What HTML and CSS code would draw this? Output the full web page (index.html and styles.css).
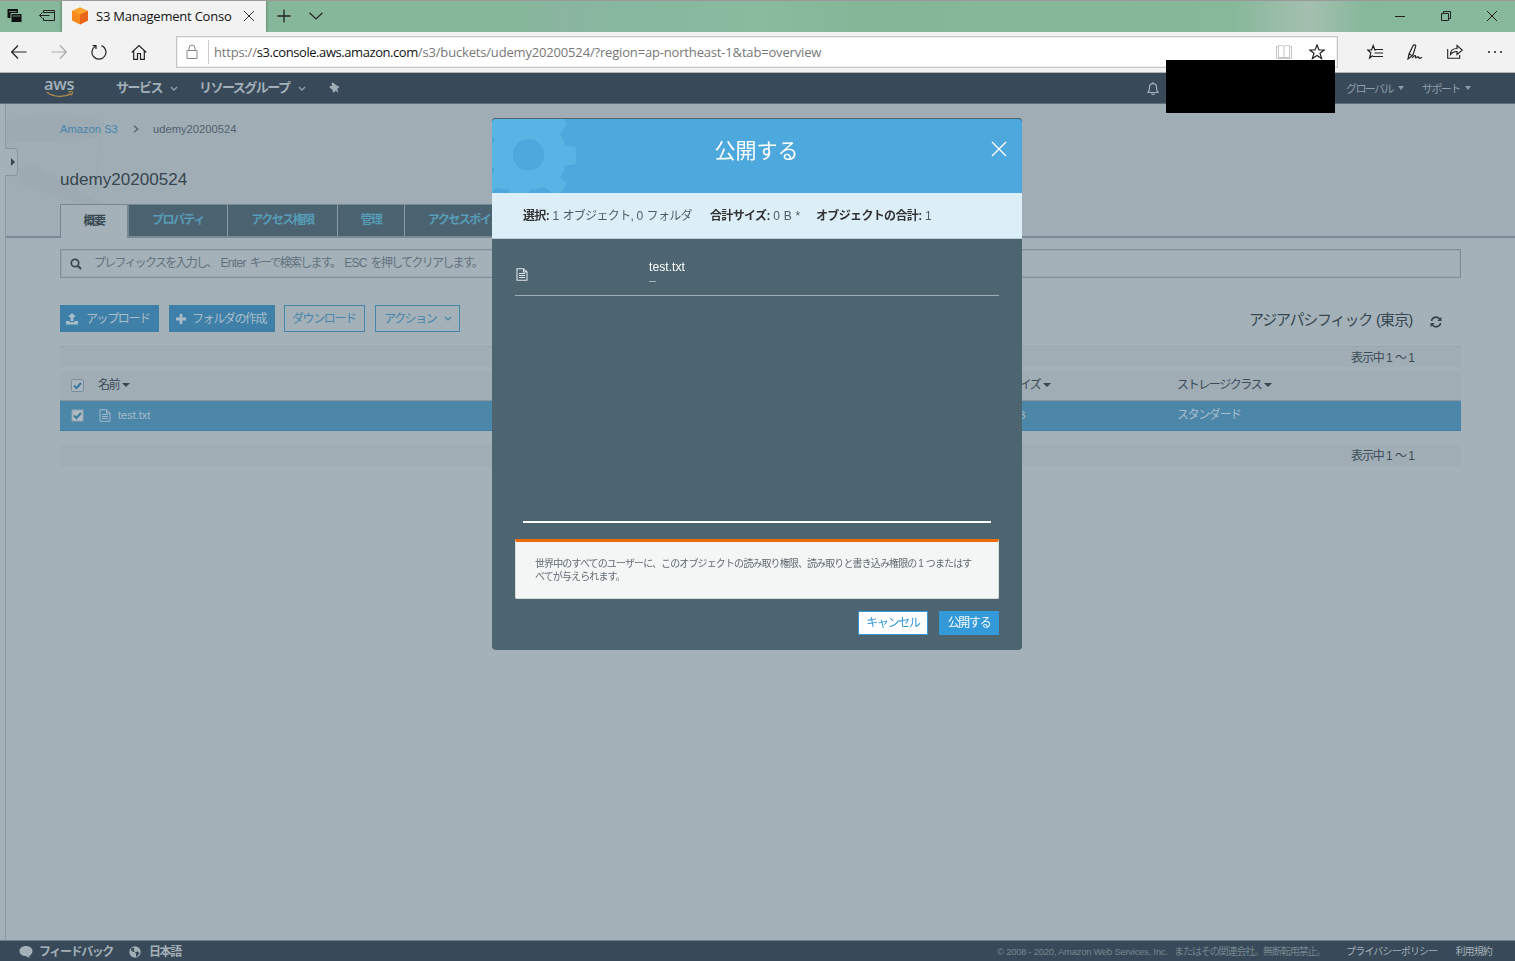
FILE: index.html
```html
<!DOCTYPE html>
<html lang="ja">
<head>
<meta charset="utf-8">
<title>S3 Management Console</title>
<link rel="stylesheet" href="styles.css">
</head>
<body>
<div class="window">
  <header class="titlebar">
    <svg class="tb-icon set-tabs" viewBox="0 0 16 16"><path d="M.5 1h10.500v9H.5z" fill="#111"/><path d="M4 5.500h11v9H4z" fill="#111" stroke="#87b89b"/><path d="M2 3.500h7.500M5.500 8h8" stroke="#87b89b" stroke-width=".7"/></svg>
    <svg class="tb-icon set-aside" viewBox="0 0 16 16"><path d="M4.500 5V2.500h11v10h-11V10M4.500 4.500h11M.5 7.500h10M3.500 4.500l-3 3 3 3" fill="none" stroke="#222"/></svg>
    <div class="tab">
      <svg class="cube" viewBox="0 0 18 18"><path d="M9 .5l8 3.500v9.500L9 17.500l-8-4V4z" fill="#f68a1e"/><path d="M9 .5l8 3.500-8 3.500L1 4z" fill="#fba12c"/><path d="M9 7.500L17 4v9.500l-8 4z" fill="#e9651b"/></svg>
      <span class="tab-title">S3 Management Conso</span>
      <svg class="tab-close" viewBox="0 0 12 12"><path d="M1 1l10 10M11 1L1 11" stroke="#333"/></svg>
    </div>
    <svg class="new-tab" viewBox="0 0 14 14"><path d="M7 .5v13M.5 7h13" stroke="#222" stroke-width="1.300"/></svg>
    <svg class="tab-list" viewBox="0 0 14 8"><path d="M.5.8L7 7l6.500-6.200" fill="none" stroke="#222" stroke-width="1.200"/></svg>
    <div class="win-controls">
      <svg viewBox="0 0 12 12"><path d="M1 6.500h10" stroke="#222"/></svg>
      <svg viewBox="0 0 12 12"><path d="M1.500 3.500h7v7h-7zM3.500 3.500v-2h7v7h-2" fill="none" stroke="#222"/></svg>
      <svg viewBox="0 0 12 12"><path d="M1 1l10 10M11 1L1 11" stroke="#222"/></svg>
    </div>
  </header>

  <div class="toolbar">
    <div class="nav-buttons">
      <svg viewBox="0 0 16 16"><path d="M15.500 8H.8M7 1.500L.7 8 7 14.500" fill="none" stroke="#222" stroke-width="1.200"/></svg>
      <svg viewBox="0 0 16 16"><path d="M.5 8h14.700M9 1.500L15.300 8 9 14.500" fill="none" stroke="#aaa" stroke-width="1.200"/></svg>
      <svg viewBox="0 0 16 16"><path d="M10.500 1.600A7 7 0 1 1 4.200 2.200M1.500 1.500h3.500v3.500" fill="none" stroke="#222" stroke-width="1.200"/></svg>
      <svg viewBox="0 0 16 16"><path d="M.7 8.500L8 1.500l7.300 7M2.700 7v8.300h3.800V9.500h3v5.800h3.800V7" fill="none" stroke="#222" stroke-width="1.200"/></svg>
    </div>
    <div class="address">
      <svg class="lock" viewBox="0 0 12 16"><path d="M1 6.500h10v8H1zM3 6.500V4a3 3 0 0 1 6 0v2.500" fill="none" stroke="#888"/></svg>
      <div class="url"><span class="u-scheme">https://</span><span class="u-host">s3.console.aws.amazon.com</span><span class="u-path">/s3/buckets/udemy20200524/?region=ap-northeast-1&amp;tab=overview</span></div>
      <svg class="book" viewBox="0 0 16 14"><path d="M.5 1.500h2V.7C5 .3 7 .5 8 1.500 9 .5 11 .3 13.500.7v.8h2v12H.5zM8 1.500v11M2.500 1.500v11h11v-11" fill="none" stroke="#c4c4c4"/></svg>
      <svg class="star" viewBox="0 0 16 16"><path d="M8 1l2 5h5.200l-4.200 3.300 1.600 5.200L8 11.400l-4.600 3.100L5 9.300.8 6H6z" fill="none" stroke="#222" stroke-width="1.200"/></svg>
    </div>
    <div class="browser-tools">
      <svg viewBox="0 0 16 16"><path d="M9 6H7.800L6.200 1.500 4.600 6H.7l3.100 2.800L2.600 14 6 11.500M7 5.500h9M7.500 9h8.500M6 12.500h10" fill="none" stroke="#222" stroke-width="1.200"/></svg>
      <svg viewBox="0 0 16 16"><path d="M1 15l1-5L6 1.800C6.800.3 9 .5 8.700 2.200L6 11l-5 4zM2.200 10L5 11.500M5 14c2-2.500 3.300-3 3.500-2s-.7 2.300.7 1.800l1.500-1c1-.5.8 1.500 2 1.500s1.500-1 2.500-.8" fill="none" stroke="#222" stroke-width="1.200"/></svg>
      <svg viewBox="0 0 16 16"><path d="M.7 5v9.300h12V11M3.500 10.500c0-4 2.500-6 6.500-6V1.500l5.300 4.700L10 10.500v-3c-3 0-5 1-6.500 3z" fill="none" stroke="#222" stroke-width="1.100"/></svg>
      <svg viewBox="0 0 16 16"><path d="M1 8h2M7 8h2M13 8h2" stroke="#222" stroke-width="1.600"/></svg>
    </div>
  </div>

  <nav class="awsnav jp">
    <div class="aws-logo"><span>aws</span>
      <svg viewBox="0 0 32 8"><path d="M1 1.500c8 6 20 6 28 1.500" fill="none" stroke="#b58a4c" stroke-width="1.500"/><path d="M25.500 1.500c2-1 4-1 4.500-.5s0 2.500-1.200 4" fill="none" stroke="#b58a4c" stroke-width="1.200"/></svg>
    </div>
    <span class="nav-item n1">サービス</span>
    <svg class="chev c1" viewBox="0 0 8 6"><path d="M1 1l3 3 3-3" fill="none" stroke="#91a0aa" stroke-width="1.300"/></svg>
    <span class="nav-item n2">リソースグループ</span>
    <svg class="chev c2" viewBox="0 0 8 6"><path d="M1 1l3 3 3-3" fill="none" stroke="#91a0aa" stroke-width="1.300"/></svg>
    <svg class="pin" viewBox="0 0 12 12"><path d="M3.500 1L5 .5l4 3.300 1.800.2.200 1.500-1.800 1.500 1.300 4L7.500 8.500 6.300 10.500 5 10.300 4.500 8 1.500 5.500 2 4h2z" fill="#a0adb6"/></svg>
    <div class="nav-right">
      <svg class="bell" viewBox="0 0 12 14"><path d="M1 10.500c1.500-1.500 1.500-3 1.500-5C2.500 3 4 1.700 6 1.700S9.500 3 9.500 5.500c0 2 0 3.500 1.500 5zM6 0v1.700M4.500 11.500c.3 1.300 2.700 1.300 3 0" fill="none" stroke="#a3b0b9" stroke-width="1.200"/></svg>
      <span class="small-item g">グローバル</span><i class="tri"></i>
      <span class="small-item s">サポート</span><i class="tri"></i>
    </div>
  </nav>

  <main class="jp">
    <div class="rail"></div>
    <div class="content">
      <section class="top">
        <svg class="watermark" viewBox="0 0 110 104"><path d="M0 18c25-9 65-8 94-2v17C60 38 25 39 0 37z" fill="#9eaab2"/><path d="M10 68c5-8 15-10 25-3l70 39H87L15 80C10 77 8 72 10 68z" fill="#9eaab2"/><path d="M97 18l-9 74" stroke="#9eaab2"/></svg>
        <div class="crumbs"><a>Amazon S3</a><svg viewBox="0 0 6 8"><path d="M1 .8L4.800 4 1 7.200" fill="none" stroke="#50606a" stroke-width="1.200"/></svg><span>udemy20200524</span></div>
        <h1>udemy20200524</h1>
        <div class="tabs">
          <span class="t active">概要</span><span class="t w98">プロパティ</span><span class="t w109">アクセス権限</span><span class="t w66">管理</span><span class="t w130">アクセスポイント</span>
        </div>
      </section>
      <section class="body">
        <div class="search">
          <svg viewBox="0 0 12 12"><circle cx="5" cy="5" r="3.700" fill="none" stroke="#37474f" stroke-width="1.700"/><path d="M7.800 7.800l3.200 3.200" stroke="#37474f" stroke-width="2"/></svg>
          <p>プレフィックスを入力し、<b>Enter</b>キーで検索します。<b class="esc">ESC</b>を押してクリアします。</p>
        </div>
        <div class="actions">
          <span class="btn fill up"><svg viewBox="0 0 12 12"><path d="M6 0l4 4H7.500v4h-3V4H2zM0 8h3.500v1.200h5V8H12v3.500H0z" fill="#a9bdca"/></svg>アップロード</span>
          <span class="btn fill folder"><svg viewBox="0 0 12 12"><path d="M6 1v10M1 6h10" stroke="#a9bdca" stroke-width="2.800"/></svg>フォルダの作成</span>
          <span class="btn line dl">ダウンロード</span>
          <span class="btn line act">アクション<svg viewBox="0 0 8 6"><path d="M1 1l3 3 3-3" fill="none" stroke="#4585a9" stroke-width="1.200"/></svg></span>
          <span class="region">アジアパシフィック<em>(東京)</em></span>
          <svg class="refresh" viewBox="0 0 12 12"><path d="M1.500 5C2 .8 7.500 0 9.700 3.200M10.500 7C10 11.200 4.500 12 2.300 8.800" fill="none" stroke="#37474f" stroke-width="1.700"/><path d="M11.500.8V5H7.300zM.5 11.200V7h4.200z" fill="#37474f"/></svg>
        </div>
        <div class="pager first"><span>表示中 <b>1</b> ～ <b>1</b></span></div>
        <div class="row head">
          <span class="cell"><svg class="check" viewBox="0 0 13 13"><rect x=".5" y=".5" width="12" height="12" rx="1.500" fill="#a9b6be" stroke="#7c8e98"/><path d="M3 6.500L5.500 9 10 4" fill="none" stroke="#37799f" stroke-width="2"/></svg></span>
          <span class="cell name">名前<i class="tri dark"></i></span>
          <span class="cell size">サイズ<i class="tri dark"></i></span>
          <span class="cell">ストレージクラス<i class="tri dark"></i></span>
        </div>
        <div class="row selected">
          <span class="cell"><svg class="check" viewBox="0 0 13 13"><rect x="1" y="1" width="11" height="11" fill="#afbac1" stroke="#91a5af"/><path d="M3 6.500L5.500 9 10 4" fill="none" stroke="#37799f" stroke-width="2"/></svg></span>
          <span class="cell name"><svg class="doc" viewBox="0 0 12 13"><path d="M1 .7h6.500L11 4v8.300H1zM7.500.7V4H11M3 5.500h6M3 7.500h6M3 9.500h6" fill="none" stroke="#a3b8c5"/></svg><span class="file">test.txt</span></span>
          <span class="cell size"><span class="file">0 B</span></span>
          <span class="cell">スタンダード</span>
        </div>
        <div class="pager last"><span>表示中 <b>1</b> ～ <b>1</b></span></div>
      </section>
    </div>
  </main>

  <footer class="jp">
    <svg class="bubble" viewBox="0 0 14 12"><path d="M7 0c4 0 6.500 2.200 6.500 5S11 10 10 10l1 2-4.500-2C2.500 10 .5 7.500 .5 5 .5 2.200 3 0 7 0z" fill="#a4b0b8"/></svg>
    <span class="f-bold fb">フィードバック</span>
    <svg class="globe" viewBox="0 0 12 12"><circle cx="6" cy="6" r="5.700" fill="#a4b0b8"/><path d="M2 2.500l2-1 1.500 1L4.500 4l1.500 1.500L4.500 6 2.500 5zM6 6l3-.5 1.500 1.500L8.500 10 7 11V8z" fill="#384a59"/></svg>
    <span class="f-bold lang">日本語</span>
    <div class="f-right">
      <span class="copy">© 2008 - 2020, Amazon Web Services, Inc. </span><span class="copy-jp">またはその関連会社。無断転用禁止。</span>
      <span class="f-link">プライバシーポリシー</span><span class="f-link">利用規約</span>
    </div>
  </footer>

  <div class="panel-handle"><i></i></div>
  <div class="redacted"></div>

  <div class="modal jp">
    <div class="m-head">
      <svg class="gear" viewBox="0 0 84 74"><path fill="#57b4e4" fill-rule="evenodd" d="M2 0H72L75 5 68 15Q72 20 73 26L84 28V45L73 47Q72 53 68 58L75 64 69 74H60L54 69 49 68Q46 70 38 71L37 74H18L17 71L4 69 0 73V55L3 51 0 49V25L3 21 0 17V0ZM36.500 20a15.800 15.800 0 1 0 .1 0z"/></svg>
      <h2>公開する</h2>
      <svg class="m-close" viewBox="0 0 16 16"><path d="M1 1l14 14M15 1L1 15" stroke="#fff" stroke-width="1.400"/></svg>
    </div>
    <div class="m-sum">
      <p class="s1"><b>選択:</b> <i>1</i> オブジェクト, <i>0</i> フォルダ</p>
      <p class="s2"><b>合計サイズ:</b> <i>0 B *</i></p>
      <p class="s3"><b>オブジェクトの合計:</b> <i>1</i></p>
    </div>
    <div class="m-body">
      <div class="m-row">
        <svg class="doc" viewBox="0 0 12 13"><path d="M1 .7h6.500L11 4v8.300H1zM7.500.7V4H11M3 5.500h6M3 7.500h6M3 9.500h6" fill="none" stroke="#dce3e7" stroke-width="1.100"/></svg>
        <div class="m-file"><span>test.txt</span><span class="dash">–</span></div>
      </div>
      <div class="m-rule"></div>
      <div class="warn">世界中のすべてのユーザーに、このオブジェクトの読み取り権限、読み取りと書き込み権限の <b>1</b> つまたはす<br>べてが与えられます。</div>
      <div class="m-foot"><span class="mb cancel">キャンセル</span><span class="mb ok">公開する</span></div>
    </div>
  </div>
</div>
</body>
</html>
```
FILE: styles.css
```css
* { box-sizing: border-box; }
body { margin: 0; }
svg { display: block; flex: none; }
.window { position: relative; width: 1515px; height: 961px; overflow: hidden; display: flex; flex-direction: column; font-family: "Liberation Sans", "Noto Sans CJK JP", sans-serif; font-size: 12px; background: #a4b1b9; }
.jp { font-family: "Liberation Sans", "Noto Sans CJK JP", sans-serif; white-space: nowrap; }

/* browser chrome */
.titlebar { height: 32px; flex: none; display: flex; align-items: center; border-top: 1px solid #999; padding-bottom: 1px; background: linear-gradient(90deg, #87b89b 0, #86b79b 520px, #8ab5a0 560px, #87b89f 640px, #8abb9f 760px, #84b698 860px, #86b89a 1230px, #a4bfaf 1310px, #86b89b 1365px, #88b99d 100%); }
.tb-icon { width: 16px; height: 16px; }
.set-tabs { margin-left: 7px; }
.set-aside { margin-left: 16px; }
.tab { width: 204px; height: 31px; margin: 0 0 -1px 7px; background: #f2f2f2; display: flex; align-items: center; padding: 0 0 1px 9px; box-shadow: 0 0 3px rgba(0,0,0,.45); clip-path: inset(0 -3px 0 -3px); }
.cube { width: 18px; height: 18px; }
.tab-title { width: 143px; margin-left: 7px; font: 13px/20px "Open Sans", sans-serif; letter-spacing: -.22px; color: #111; white-space: nowrap; }
.tab-close { width: 12px; height: 12px; margin-left: 4px; }
.new-tab { width: 14px; height: 14px; margin-left: 11px; }
.tab-list { width: 14px; height: 8px; margin-left: 18px; }
.win-controls { margin-left: auto; display: flex; gap: 34px; padding-right: 17px; }
.win-controls svg { width: 12px; height: 12px; }
.toolbar { height: 41px; flex: none; background: #f2f2f2; border-bottom: 1px solid #b4b4b4; display: flex; align-items: center; padding-right: 12px; }
.nav-buttons { display: flex; gap: 24px; padding-left: 11px; width: 176px; }
.nav-buttons svg, .browser-tools svg { width: 16px; height: 16px; }
.address { width: 1162px; height: 32px; background: #fff; border: 1px solid #c6c6c6; display: flex; align-items: center; box-shadow: inset 0 0 0 1px #eee; }
.lock { width: 12px; height: 16px; margin: 0 10px 0 9px; }
.url { flex: 1; border-left: 1px solid #ccc; line-height: 24px; padding-left: 5px; font-family: "Open Sans", sans-serif; font-size: 13px; color: #777; white-space: nowrap; }
.u-scheme { letter-spacing: -.2px; }
.u-host { color: #111; letter-spacing: -.43px; }
.u-path { letter-spacing: -.17px; }
.book { width: 16px; height: 14px; margin-right: 17px; }
.star { width: 16px; height: 16px; margin-right: 12px; }
.browser-tools { margin-left: auto; display: flex; gap: 24px; }
.browser-tools svg:last-child { margin-right: 0; }

/* console navigation */
.awsnav { height: 31px; flex: none; background: #384a59; display: flex; align-items: center; border-bottom: 1px solid #5f707c; color: #a3b0b9; }
.aws-logo { width: 32px; height: 22px; margin-left: 44px; line-height: 14px; font-family: "Open Sans", sans-serif; font-size: 16.5px; font-weight: 600; letter-spacing: -.3px; }
.aws-logo span { display: block; height: 14px; }
.aws-logo svg { width: 32px; height: 7px; }
.nav-item { font-weight: 700; font-size: 13px; letter-spacing: -1.5px; line-height: 20px; }
.n1 { margin-left: 40px; width: 54px; }
.n2 { margin-left: 21px; width: 99px; }
.chev { width: 8px; height: 6px; margin-top: 2px; }
.pin { width: 12px; height: 12px; margin-left: 22px; }
.nav-right { margin-left: auto; display: flex; align-items: center; margin-right: 44px; }
.bell { width: 12px; height: 14px; margin: 2px 187px 0 0; }
.small-item { font-size: 11px; letter-spacing: -1.6px; width: 52px; color: #8f9ea8; line-height: 20px; padding-top: 1px; }
.small-item.s { margin-left: 18px; width: 43px; }
.tri { display: inline-block; border: 3.5px solid transparent; border-top: 4px solid #8f9ea8; border-bottom: 0; width: 0; }
.tri.dark { border: 4px solid transparent; border-top: 4.5px solid #37474f; border-bottom: 0; margin-left: 3px; }

/* page */
main { flex: 1; display: flex; }
.rail { width: 6px; border-right: 1px solid #8b9aa3; }
.content { flex: 1; display: flex; flex-direction: column; }
.top { position: relative; height: 132px; background: #a0adb5; border-bottom: 2px solid #778b97; padding-left: 54px; display: flex; flex-direction: column; box-sizing: content-box; }
.watermark { position: absolute; left: 0; top: 0; width: 110px; height: 104px; }
.crumbs { position: relative; display: flex; align-items: center; height: 50px; font-size: 11.2px; color: #50606a; }
.crumbs a { width: 73px; color: #4585ad; }
.crumbs svg { width: 6px; height: 8px; margin-right: 14px; }
h1 { position: relative; margin: 16px 0 14px; font-size: 17.1px; font-weight: 400; line-height: 20px; color: #36454e; }
.tabs { position: relative; display: flex; margin-top: 0; height: 32px; }
.t { height: 32px; border-top: 1px solid #738894; border-right: 1px solid #8c9ca6; background: #4b6371; color: #579cb8; font-weight: 700; font-size: 12px; letter-spacing: -1.5px; text-align: center; line-height: 31px; }
.active { width: 69px; height: 34px; background: #a4b1b9; color: #37474f; border-left: 1px solid #738894; border-right: 2px solid #738894; line-height: 33px; }
.w98 { width: 99px; } .w109 { width: 110px; } .w66 { width: 67px; } .w130 { width: 130px; }
.body { padding: 11px 54px 0 54px; display: flex; flex-direction: column; }
.search { height: 29px; border: 1px solid #7e919d; box-shadow: inset 0 0 0 .5px #8d9ca6; display: flex; align-items: center; padding-left: 9px; }
.search svg { width: 12px; height: 12px; }
.search p { margin: 0 0 0 12px; font-size: 12px; letter-spacing: -1.74px; color: #62727c; line-height: 20px; padding-bottom: 1px; }
.search b { font-weight: 400; letter-spacing: -.7px; margin: 0 4px; }
.actions { display: flex; height: 27px; margin-top: 27px; align-items: center; color: #37474f; }
.btn { height: 27px; display: flex; align-items: center; font-size: 12px; letter-spacing: -1.4px; line-height: 20px; border: 1px solid #4585a9; color: #4585a9; }
.btn.fill { background: #3f80a8; color: #a9bdca; border-color: #3f80a8; }
.up { width: 99px; padding-left: 5px; gap: 8px; }
.folder { width: 106px; margin-left: 10px; padding-left: 5px; gap: 5px; }
.btn.fill svg { width: 12px; height: 12px; }
.dl { width: 81px; margin-left: 9px; padding-left: 7px; }
.act { width: 85px; margin-left: 10px; padding-left: 8px; gap: 8px; }
.act svg { width: 8px; height: 6px; }
.region { margin-left: auto; width: 181px; font-size: 15px; letter-spacing: -1.2px; line-height: 24px; padding-top: 3px; }
.region em { font-style: normal; margin-left: 4px; letter-spacing: -.9px; }
.refresh { width: 12px; height: 12px; margin: 7px 19px 0 0; }
.pager { height: 21px; background: #a0adb5; display: flex; justify-content: flex-end; padding-right: 46px; font-size: 12px; line-height: 23px; letter-spacing: -1.2px; color: #3c4b55; }
.pager b { font-weight: 400; letter-spacing: 0; }
.pager span { word-spacing: .3px; }
.first { margin-top: 14px; border-top: 1px solid #97a5ae; line-height: 22px; }
.last { margin-top: 14px; }
.row { display: grid; grid-template-columns: 38px 911px 168px 1fr; height: 30px; align-items: center; font-size: 12px; letter-spacing: -1.4px; line-height: 20px; color: #3c4b55; }
.cell { display: flex; align-items: center; }
.head { margin-top: 4px; background: #a0adb5; border-bottom: 1px solid #8896a0; padding-bottom: 1px; }
.selected { background: #4c86a8; color: #a9bdca; border-bottom: 1px solid #3f80a8; padding-bottom: 1px; }
.check { width: 13px; height: 13px; margin-left: 11px; }
.doc { width: 12px; height: 13px; }
.selected .doc { margin-left: 1px; }
.file { font-size: 11px; letter-spacing: 0; }
.selected .name .file { margin-left: 7px; }

footer { height: 20px; flex: none; background: #384a59; box-shadow: 0 -1px #6d7f8b; display: flex; align-items: center; color: #a4b0b8; line-height: 20px; padding-top: 2px; }
.bubble { width: 14px; height: 12px; margin-left: 19px; }
.f-bold { font-weight: 700; letter-spacing: -1.4px; }
.fb { margin-left: 6px; width: 90px; }
.globe { width: 12px; height: 12px; }
.lang { margin-left: 8px; }
.f-right { margin-left: auto; display: flex; margin-right: 23px; }
.copy { width: 177px; font-size: 9.5px; letter-spacing: -.28px; color: #76868f; }
.copy-jp { width: 172px; font-size: 10px; letter-spacing: -1.1px; color: #76868f; }
.f-link { font-size: 10px; letter-spacing: -.85px; }
.f-link + .f-link { margin-left: 18px; }

.panel-handle { position: absolute; left: 5px; top: 148px; width: 13px; height: 28px; border: 1px solid #8796a0; border-left: 0; border-radius: 0 4px 4px 0; background: #a4b1b9; display: flex; align-items: center; padding-left: 6px; }
.panel-handle i { border: 4px solid transparent; border-left: 4px solid #37474f; border-right: 0; }
.redacted { position: absolute; left: 1166px; top: 60px; width: 169px; height: 53px; background: #000; }

/* dialog */
.modal { position: absolute; left: 492px; top: 119px; width: 530px; height: 531px; border-radius: 4px; overflow: hidden; background: #4d6471; display: flex; flex-direction: column; filter: drop-shadow(0 -1px .5px rgba(35,50,60,.6)); }
.m-head { position: relative; height: 74px; background: #4ca8dd; display: flex; justify-content: center; }
.gear { position: absolute; left: 0; top: 0; width: 84px; height: 74px; }
h2 { margin: 17px 1px 0 0; font-size: 21px; line-height: 30px; font-weight: 400; color: #fff; }
.m-close { position: absolute; right: 15px; top: 22px; width: 16px; height: 16px; }
.m-sum { height: 46px; background: #dceef8; border-bottom: 1px solid #b9cbd5; color: #505c64; display: flex; align-items: center; padding-left: 31px; font-size: 12px; letter-spacing: -.65px; word-spacing: .7px; line-height: 20px; }
.m-sum p { margin: 0; }
.m-sum b { color: #333; }
.m-sum i { font-style: normal; letter-spacing: -.1px; }
.s1 { width: 187px; } .s2 { width: 106px; }
.m-body { flex: 1; display: flex; flex-direction: column; padding: 0 23px; }
.m-row { height: 57px; border-bottom: 1px solid #a0adb5; display: flex; align-items: center; }
.m-row .doc { margin: 14px 121px 0 1px; height: 13px; }
.m-file { display: flex; flex-direction: column; font-size: 12.2px; line-height: 14px; color: #fff; padding-top: 15px; }
.dash { color: #b4c0c8; line-height: 15px; }
.m-rule { height: 2px; margin: 225px 8px 0 8px; background: #fff; }
.warn { height: 60px; margin-top: 16px; background: #f4f6f6; border: 1px solid #d5dbdb; border-top: 3px solid #eb6a0a; border-radius: 0 0 2px 2px; padding: 15px 0 0 19px; font-size: 10px; letter-spacing: -.88px; line-height: 13px; color: #606a70; }
.warn b { font-weight: 400; letter-spacing: 0; }
.m-foot { display: flex; justify-content: flex-end; gap: 11px; margin-top: 12px; }
.mb { height: 24px; border: 1px solid #3399d8; font-size: 12px; letter-spacing: -1.35px; line-height: 23px; text-align: center; }
.cancel { width: 70px; background: #fff; color: #3399d8; }
.ok { width: 60px; background: #3399d8; color: #fff; }
```
